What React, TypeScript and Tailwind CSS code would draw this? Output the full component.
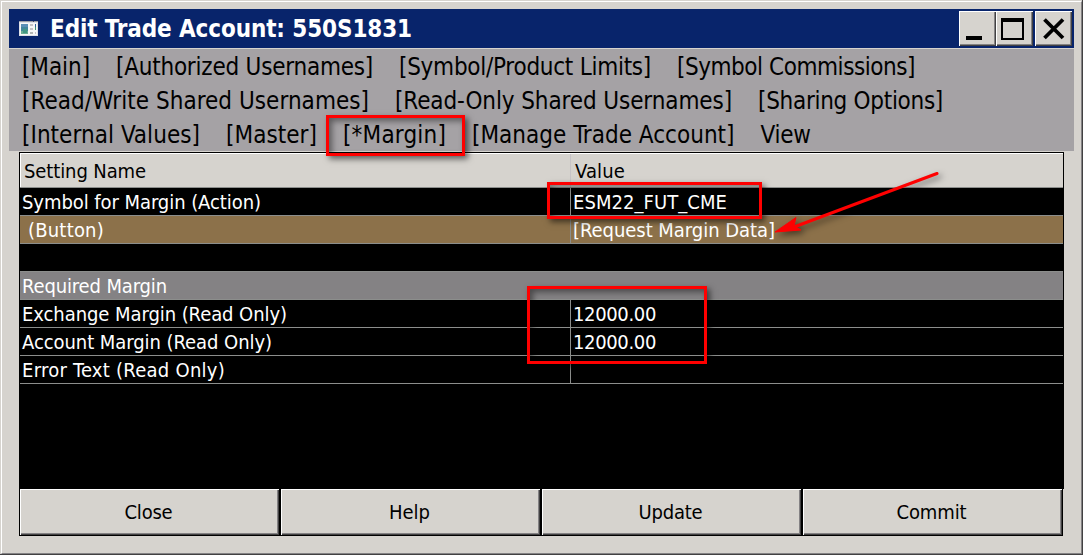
import { useLayoutEffect, useRef } from "react";

type LabelProps = { text: string; width: number; className?: string };

/* Text tracked so that it occupies exactly `width` pixels. */
function Label({ text, width, className = "" }: LabelProps) {
  const ref = useRef<HTMLSpanElement>(null);
  useLayoutEffect(() => {
    const el = ref.current;
    if (!el) return;
    el.style.letterSpacing = "0px";
    const natural = el.getBoundingClientRect().width;
    el.style.letterSpacing = `${(width - natural) / text.length}px`;
  }, [text, width]);
  return (
    <span ref={ref} className={`inline-block shrink-0 whitespace-pre ${className}`}>
      {text}
    </span>
  );
}

const menu: { text: string; width: number }[][] = [
  [
    { text: "[Main]", width: 68 },
    { text: "[Authorized Usernames]", width: 257 },
    { text: "[Symbol/Product Limits]", width: 252 },
    { text: "[Symbol Commissions]", width: 238 },
  ],
  [
    { text: "[Read/Write Shared Usernames]", width: 347 },
    { text: "[Read-Only Shared Usernames]", width: 337 },
    { text: "[Sharing Options]", width: 185 },
  ],
  [
    { text: "[Internal Values]", width: 178 },
    { text: "[Master]", width: 91 },
    { text: "[*Margin]", width: 103 },
    { text: "[Manage Trade Account]", width: 262.5 },
    { text: "View", width: 50 },
  ],
];

type Row = { name?: string; nw?: number; value?: string; vw?: number; tone: string; split: boolean };

const rows: Row[] = [
  { name: "Symbol for Margin (Action)", nw: 239, value: "ESM22_FUT_CME", vw: 154, tone: "bg-black", split: true },
  { name: " (Button)", nw: 82, value: "[Request Margin Data]", vw: 202, tone: "bg-[#8c714a]", split: true },
  { tone: "bg-black", split: false },
  { name: "Required Margin", nw: 145, tone: "bg-[#848284]", split: false },
  { name: "Exchange Margin (Read Only)", nw: 265, value: "12000.00", vw: 83, tone: "bg-black", split: true },
  { name: "Account Margin (Read Only)", nw: 250, value: "12000.00", vw: 83, tone: "bg-black", split: true },
  { name: "Error Text (Read Only)", nw: 203, tone: "bg-black", split: true },
];

const actions = [
  { text: "Close", width: 48 },
  { text: "Help", width: 41 },
  { text: "Update", width: 64 },
  { text: "Commit", width: 70 },
];

const bevel =
  "border-t border-l border-white shadow-[inset_-1px_-1px_0_#424142,inset_-2px_-2px_0_#848284] bg-[#d6d3ce]";

const highlight =
  "absolute border-[3px] border-[#ff0000] shadow-[3px_3px_6px_rgba(0,0,0,0.55),inset_3px_3px_6px_rgba(0,0,0,0.45)]";

function AppIcon() {
  return (
    <svg width="19" height="15" viewBox="0 0 19 15" shapeRendering="crispEdges">
      <rect width="19" height="15" fill="#dedfe7" />
      <rect width="19" height="1" fill="#9c9ea5" />
      <rect x="14" y="0" width="1" height="1" fill="#42496b" />
      <rect x="1" y="2" width="17" height="12" fill="#f7f7f7" />
      <rect x="2" y="3" width="7" height="10" fill="#5a8eb5" />
      <rect x="2" y="6" width="7" height="4" fill="#42869c" />
      <rect x="2" y="10" width="7" height="3" fill="#6bae94" />
      <rect x="4" y="8" width="4" height="4" fill="#429684" />
      <rect x="11" y="3" width="3" height="2" fill="#c6c3c6" />
      <rect x="11" y="7" width="3" height="2" fill="#c6c3c6" />
      <rect x="11" y="11" width="3" height="2" fill="#b5b6b5" />
      <rect x="16" y="3" width="1" height="3" fill="#31619c" />
      <rect x="16" y="6" width="1" height="3" fill="#429673" />
      <rect x="16" y="11" width="1" height="2" fill="#c6c3c6" />
    </svg>
  );
}

export default function App() {
  return (
    <div className="relative h-[555px] w-[1083px] overflow-hidden bg-[#d6d3ce] font-['DejaVu_Sans_Condensed','DejaVu_Sans',sans-serif] text-black [font-stretch:condensed]">
      <div className="flex h-full flex-col border-r border-b border-[#424142] pt-px pl-px">
        <div className="flex min-h-0 flex-1 flex-col border-t border-r border-b border-l border-t-white border-r-[#848284] border-b-[#848284] border-l-white pt-[7px] pr-[7px] pl-[7px]">
          <header className="flex h-[39px] shrink-0 items-center bg-[#08246b] pl-[10px]">
            <AppIcon />
            <Label
              text="Edit Trade Account: 550S1831"
              width={362}
              className="ml-[12px] text-[24px] font-bold text-white"
            />
            <div className="mr-[2px] ml-auto flex">
              <button className={`flex h-[35px] w-[37px] ${bevel}`}>
                <span className="mt-[24px] ml-[6px] h-[4px] w-[16px] bg-black" />
              </button>
              <button className={`flex h-[35px] w-[37px] ${bevel}`}>
                <span className="mt-[6px] ml-[4px] h-[22px] w-[23px] border-2 border-t-4 border-black" />
              </button>
              <button className={`ml-[2px] flex h-[35px] w-[37px] ${bevel}`}>
                <svg className="mt-[6px] ml-[7px]" width="22" height="22" viewBox="0 0 22 22">
                  <path d="M1.5 1.5 20 20M20 1.5 1.5 20" stroke="#000" strokeWidth="3.8" />
                </svg>
              </button>
            </div>
          </header>

          <nav className="mt-px h-[102px] shrink-0 bg-[#a5a2a5] pt-px pl-[13px] text-[24px]">
            {menu.map((line, i) => (
              <div key={i} className="flex h-[34px] items-center gap-[26px] leading-[34px]">
                {line.map((item) => (
                  <Label key={item.text} {...item} />
                ))}
              </div>
            ))}
          </nav>

          <main className="mt-px ml-[10px] h-[384px] w-[1045px] shrink-0 text-[20px]">
            <div className="h-[337px] border-t border-r border-l border-black bg-black">
              <div className="flex h-[34px] border-t border-l border-white bg-[#d6d3ce] leading-[34px]">
                <div className="w-[550px] border-r border-[#c6c3c6] pl-[3px]">
                  <Label text="Setting Name" width={122} />
                </div>
                <Label text="Value" width={50} className="ml-[4px]" />
              </div>
              <div className="border-b border-[#8c8e8c] text-white">
                {rows.map((row, i) => (
                  <div
                    key={i}
                    className={`flex h-[28px] border-t border-[#8c8e8c] leading-[28px] ${row.tone}`}
                  >
                    <div className={`w-[551px] pl-[2px] ${row.split ? "border-r border-[#8c8e8c]" : ""}`}>
                      {row.name && <Label text={row.name} width={row.nw ?? 0} />}
                    </div>
                    {row.value && <Label text={row.value} width={row.vw ?? 0} className="ml-[2px]" />}
                  </div>
                ))}
              </div>
            </div>
            <div className="flex h-[47px] w-[1044px] gap-[2px] bg-black pr-px pb-px pl-px">
              {actions.map((action) => (
                <button
                  key={action.text}
                  className={`flex h-[46px] flex-1 items-center justify-center pr-[3px] pb-[2px] ${bevel}`}
                >
                  <Label {...action} />
                </button>
              ))}
            </div>
          </main>
        </div>
      </div>

      <div className={`top-[115px] left-[326px] h-[41px] w-[139px] ${highlight}`} />
      <div className={`top-[182px] left-[547px] h-[37px] w-[215px] ${highlight}`} />
      <div className={`top-[286px] left-[527px] h-[78px] w-[180px] ${highlight}`} />
      <svg
        className="absolute top-[160px] left-[760px] drop-shadow-[3px_3px_3px_rgba(0,0,0,0.5)]"
        width="190"
        height="90"
        viewBox="0 0 190 90"
      >
        <path d="M177 13.500 34 67" stroke="#f00" strokeWidth="3" strokeLinecap="round" />
        <path d="M15 72 36 57.500 34 66 41 70Z" fill="#f00" stroke="#f00" strokeWidth="1" />
      </svg>
    </div>
  );
}
